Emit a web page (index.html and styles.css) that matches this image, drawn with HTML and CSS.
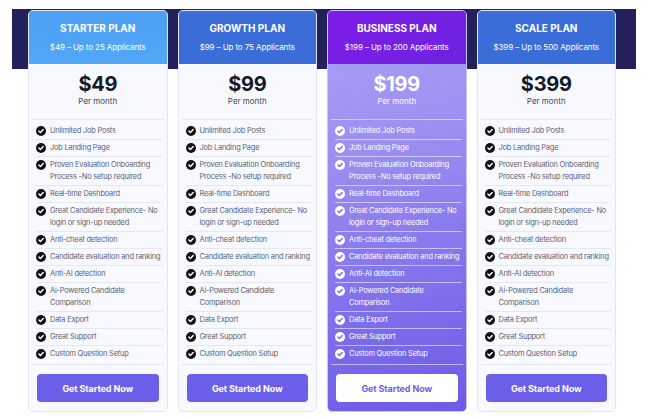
FILE: index.html
```html
<!DOCTYPE html>
<html>
<head>
<meta charset="utf-8">
<link rel="stylesheet" href="styles.css">
</head>
<body>
<div class="stage">
  <div class="plans">
    <div class="card">
      <div class="head head-starter">
        <div class="title">STARTER PLAN</div>
        <div class="sub">$49 – Up to 25 Applicants</div>
      </div>
      <div class="body">
        <div class="price-box">
          <div class="price">$49</div>
          <div class="per">Per month</div>
        </div>
        <ul class="features">
          <li><svg class="ic" viewBox="0 0 10 10"><circle cx="5" cy="5" r="5"/><path d="M2.9 5.1 L4.4 6.6 L7.2 3.6"/></svg><span>Unlimited Job Posts</span></li>
          <li><svg class="ic" viewBox="0 0 10 10"><circle cx="5" cy="5" r="5"/><path d="M2.9 5.1 L4.4 6.6 L7.2 3.6"/></svg><span>Job Landing Page</span></li>
          <li><svg class="ic" viewBox="0 0 10 10"><circle cx="5" cy="5" r="5"/><path d="M2.9 5.1 L4.4 6.6 L7.2 3.6"/></svg><span>Proven Evaluation Onboarding Process -No setup required</span></li>
          <li><svg class="ic" viewBox="0 0 10 10"><circle cx="5" cy="5" r="5"/><path d="M2.9 5.1 L4.4 6.6 L7.2 3.6"/></svg><span>Real-time Dashboard</span></li>
          <li><svg class="ic" viewBox="0 0 10 10"><circle cx="5" cy="5" r="5"/><path d="M2.9 5.1 L4.4 6.6 L7.2 3.6"/></svg><span>Great Candidate Experience- No login or sign-up needed</span></li>
          <li><svg class="ic" viewBox="0 0 10 10"><circle cx="5" cy="5" r="5"/><path d="M2.9 5.1 L4.4 6.6 L7.2 3.6"/></svg><span>Anti-cheat detection</span></li>
          <li><svg class="ic" viewBox="0 0 10 10"><circle cx="5" cy="5" r="5"/><path d="M2.9 5.1 L4.4 6.6 L7.2 3.6"/></svg><span>Candidate evaluation and ranking</span></li>
          <li><svg class="ic" viewBox="0 0 10 10"><circle cx="5" cy="5" r="5"/><path d="M2.9 5.1 L4.4 6.6 L7.2 3.6"/></svg><span>Anti-AI detection</span></li>
          <li><svg class="ic" viewBox="0 0 10 10"><circle cx="5" cy="5" r="5"/><path d="M2.9 5.1 L4.4 6.6 L7.2 3.6"/></svg><span>Ai-Powered Candidate Comparison</span></li>
          <li><svg class="ic" viewBox="0 0 10 10"><circle cx="5" cy="5" r="5"/><path d="M2.9 5.1 L4.4 6.6 L7.2 3.6"/></svg><span>Data Export</span></li>
          <li><svg class="ic" viewBox="0 0 10 10"><circle cx="5" cy="5" r="5"/><path d="M2.9 5.1 L4.4 6.6 L7.2 3.6"/></svg><span>Great Support</span></li>
          <li><svg class="ic" viewBox="0 0 10 10"><circle cx="5" cy="5" r="5"/><path d="M2.9 5.1 L4.4 6.6 L7.2 3.6"/></svg><span>Custom Question Setup</span></li>
        </ul>
        <div class="foot"><button class="btn">Get Started Now</button></div>
      </div>
    </div>

    <div class="card">
      <div class="head head-blue">
        <div class="title">GROWTH PLAN</div>
        <div class="sub">$99 – Up to 75 Applicants</div>
      </div>
      <div class="body">
        <div class="price-box">
          <div class="price">$99</div>
          <div class="per">Per month</div>
        </div>
        <ul class="features">
          <li><svg class="ic" viewBox="0 0 10 10"><circle cx="5" cy="5" r="5"/><path d="M2.9 5.1 L4.4 6.6 L7.2 3.6"/></svg><span>Unlimited Job Posts</span></li>
          <li><svg class="ic" viewBox="0 0 10 10"><circle cx="5" cy="5" r="5"/><path d="M2.9 5.1 L4.4 6.6 L7.2 3.6"/></svg><span>Job Landing Page</span></li>
          <li><svg class="ic" viewBox="0 0 10 10"><circle cx="5" cy="5" r="5"/><path d="M2.9 5.1 L4.4 6.6 L7.2 3.6"/></svg><span>Proven Evaluation Onboarding Process -No setup required</span></li>
          <li><svg class="ic" viewBox="0 0 10 10"><circle cx="5" cy="5" r="5"/><path d="M2.9 5.1 L4.4 6.6 L7.2 3.6"/></svg><span>Real-time Dashboard</span></li>
          <li><svg class="ic" viewBox="0 0 10 10"><circle cx="5" cy="5" r="5"/><path d="M2.9 5.1 L4.4 6.6 L7.2 3.6"/></svg><span>Great Candidate Experience- No login or sign-up needed</span></li>
          <li><svg class="ic" viewBox="0 0 10 10"><circle cx="5" cy="5" r="5"/><path d="M2.9 5.1 L4.4 6.6 L7.2 3.6"/></svg><span>Anti-cheat detection</span></li>
          <li><svg class="ic" viewBox="0 0 10 10"><circle cx="5" cy="5" r="5"/><path d="M2.9 5.1 L4.4 6.6 L7.2 3.6"/></svg><span>Candidate evaluation and ranking</span></li>
          <li><svg class="ic" viewBox="0 0 10 10"><circle cx="5" cy="5" r="5"/><path d="M2.9 5.1 L4.4 6.6 L7.2 3.6"/></svg><span>Anti-AI detection</span></li>
          <li><svg class="ic" viewBox="0 0 10 10"><circle cx="5" cy="5" r="5"/><path d="M2.9 5.1 L4.4 6.6 L7.2 3.6"/></svg><span>Ai-Powered Candidate Comparison</span></li>
          <li><svg class="ic" viewBox="0 0 10 10"><circle cx="5" cy="5" r="5"/><path d="M2.9 5.1 L4.4 6.6 L7.2 3.6"/></svg><span>Data Export</span></li>
          <li><svg class="ic" viewBox="0 0 10 10"><circle cx="5" cy="5" r="5"/><path d="M2.9 5.1 L4.4 6.6 L7.2 3.6"/></svg><span>Great Support</span></li>
          <li><svg class="ic" viewBox="0 0 10 10"><circle cx="5" cy="5" r="5"/><path d="M2.9 5.1 L4.4 6.6 L7.2 3.6"/></svg><span>Custom Question Setup</span></li>
        </ul>
        <div class="foot"><button class="btn">Get Started Now</button></div>
      </div>
    </div>

    <div class="card card-featured">
      <div class="head head-purple">
        <div class="title">BUSINESS PLAN</div>
        <div class="sub">$199 – Up to 200 Applicants</div>
      </div>
      <div class="body">
        <div class="price-box">
          <div class="price">$199</div>
          <div class="per">Per month</div>
        </div>
        <ul class="features">
          <li><svg class="ic" viewBox="0 0 10 10"><circle cx="5" cy="5" r="5"/><path d="M2.9 5.1 L4.4 6.6 L7.2 3.6"/></svg><span>Unlimited Job Posts</span></li>
          <li><svg class="ic" viewBox="0 0 10 10"><circle cx="5" cy="5" r="5"/><path d="M2.9 5.1 L4.4 6.6 L7.2 3.6"/></svg><span>Job Landing Page</span></li>
          <li><svg class="ic" viewBox="0 0 10 10"><circle cx="5" cy="5" r="5"/><path d="M2.9 5.1 L4.4 6.6 L7.2 3.6"/></svg><span>Proven Evaluation Onboarding Process -No setup required</span></li>
          <li><svg class="ic" viewBox="0 0 10 10"><circle cx="5" cy="5" r="5"/><path d="M2.9 5.1 L4.4 6.6 L7.2 3.6"/></svg><span>Real-time Dashboard</span></li>
          <li><svg class="ic" viewBox="0 0 10 10"><circle cx="5" cy="5" r="5"/><path d="M2.9 5.1 L4.4 6.6 L7.2 3.6"/></svg><span>Great Candidate Experience- No login or sign-up needed</span></li>
          <li><svg class="ic" viewBox="0 0 10 10"><circle cx="5" cy="5" r="5"/><path d="M2.9 5.1 L4.4 6.6 L7.2 3.6"/></svg><span>Anti-cheat detection</span></li>
          <li><svg class="ic" viewBox="0 0 10 10"><circle cx="5" cy="5" r="5"/><path d="M2.9 5.1 L4.4 6.6 L7.2 3.6"/></svg><span>Candidate evaluation and ranking</span></li>
          <li><svg class="ic" viewBox="0 0 10 10"><circle cx="5" cy="5" r="5"/><path d="M2.9 5.1 L4.4 6.6 L7.2 3.6"/></svg><span>Anti-AI detection</span></li>
          <li><svg class="ic" viewBox="0 0 10 10"><circle cx="5" cy="5" r="5"/><path d="M2.9 5.1 L4.4 6.6 L7.2 3.6"/></svg><span>Ai-Powered Candidate Comparison</span></li>
          <li><svg class="ic" viewBox="0 0 10 10"><circle cx="5" cy="5" r="5"/><path d="M2.9 5.1 L4.4 6.6 L7.2 3.6"/></svg><span>Data Export</span></li>
          <li><svg class="ic" viewBox="0 0 10 10"><circle cx="5" cy="5" r="5"/><path d="M2.9 5.1 L4.4 6.6 L7.2 3.6"/></svg><span>Great Support</span></li>
          <li><svg class="ic" viewBox="0 0 10 10"><circle cx="5" cy="5" r="5"/><path d="M2.9 5.1 L4.4 6.6 L7.2 3.6"/></svg><span>Custom Question Setup</span></li>
        </ul>
        <div class="foot"><button class="btn">Get Started Now</button></div>
      </div>
    </div>

    <div class="card">
      <div class="head head-blue">
        <div class="title">SCALE PLAN</div>
        <div class="sub">$399 – Up to 500 Applicants</div>
      </div>
      <div class="body">
        <div class="price-box">
          <div class="price">$399</div>
          <div class="per">Per month</div>
        </div>
        <ul class="features">
          <li><svg class="ic" viewBox="0 0 10 10"><circle cx="5" cy="5" r="5"/><path d="M2.9 5.1 L4.4 6.6 L7.2 3.6"/></svg><span>Unlimited Job Posts</span></li>
          <li><svg class="ic" viewBox="0 0 10 10"><circle cx="5" cy="5" r="5"/><path d="M2.9 5.1 L4.4 6.6 L7.2 3.6"/></svg><span>Job Landing Page</span></li>
          <li><svg class="ic" viewBox="0 0 10 10"><circle cx="5" cy="5" r="5"/><path d="M2.9 5.1 L4.4 6.6 L7.2 3.6"/></svg><span>Proven Evaluation Onboarding Process -No setup required</span></li>
          <li><svg class="ic" viewBox="0 0 10 10"><circle cx="5" cy="5" r="5"/><path d="M2.9 5.1 L4.4 6.6 L7.2 3.6"/></svg><span>Real-time Dashboard</span></li>
          <li><svg class="ic" viewBox="0 0 10 10"><circle cx="5" cy="5" r="5"/><path d="M2.9 5.1 L4.4 6.6 L7.2 3.6"/></svg><span>Great Candidate Experience- No login or sign-up needed</span></li>
          <li><svg class="ic" viewBox="0 0 10 10"><circle cx="5" cy="5" r="5"/><path d="M2.9 5.1 L4.4 6.6 L7.2 3.6"/></svg><span>Anti-cheat detection</span></li>
          <li><svg class="ic" viewBox="0 0 10 10"><circle cx="5" cy="5" r="5"/><path d="M2.9 5.1 L4.4 6.6 L7.2 3.6"/></svg><span>Candidate evaluation and ranking</span></li>
          <li><svg class="ic" viewBox="0 0 10 10"><circle cx="5" cy="5" r="5"/><path d="M2.9 5.1 L4.4 6.6 L7.2 3.6"/></svg><span>Anti-AI detection</span></li>
          <li><svg class="ic" viewBox="0 0 10 10"><circle cx="5" cy="5" r="5"/><path d="M2.9 5.1 L4.4 6.6 L7.2 3.6"/></svg><span>Ai-Powered Candidate Comparison</span></li>
          <li><svg class="ic" viewBox="0 0 10 10"><circle cx="5" cy="5" r="5"/><path d="M2.9 5.1 L4.4 6.6 L7.2 3.6"/></svg><span>Data Export</span></li>
          <li><svg class="ic" viewBox="0 0 10 10"><circle cx="5" cy="5" r="5"/><path d="M2.9 5.1 L4.4 6.6 L7.2 3.6"/></svg><span>Great Support</span></li>
          <li><svg class="ic" viewBox="0 0 10 10"><circle cx="5" cy="5" r="5"/><path d="M2.9 5.1 L4.4 6.6 L7.2 3.6"/></svg><span>Custom Question Setup</span></li>
        </ul>
        <div class="foot"><button class="btn">Get Started Now</button></div>
      </div>
    </div>
  </div>
</div>
</body>
</html>
```

FILE: styles.css
```css
* { box-sizing: border-box; }
html, body { margin: 0; padding: 0; background: #ffffff; }
body { font-family: Inter, "Noto Sans", sans-serif; }

.stage {
  width: 651px;
  height: 419px;
  padding: 10px 0 0 28px;
  background: linear-gradient(#23215b, #23215b) no-repeat 12px 9px / 624px 60px, #ffffff;
}

.plans {
  display: grid;
  grid-template-columns: repeat(4, 139.5px);
  column-gap: 10px;
}

.card {
  height: 402px;
  border: 1px solid #e3e6f0;
  border-radius: 5px;
  background: #f8f9ff;
  overflow: hidden;
  display: flex;
  flex-direction: column;
}

.head {
  height: 53px;
  padding-top: 11px;
  text-align: center;
  color: #ffffff;
}
.head-starter { background: linear-gradient(180deg, #4c9ff3, #51a7f8); }
.head-blue { background: #3b6dd8; }
.head-purple { background: linear-gradient(135deg, #7d1de9, #6d23de); }

.title {
  font-size: 10px;
  font-weight: 700;
  line-height: 12px;
}
.sub {
  margin-top: 7px;
  font-size: 8px;
  line-height: 12px;
  letter-spacing: -0.1px;
}

.body {
  flex: 1;
  padding: 0 3px;
  display: flex;
  flex-direction: column;
}

.price-box {
  padding: 8px 0 13px;
  text-align: center;
  border-bottom: 1px solid #e6e8f0;
}
.price {
  font-size: 20px;
  font-weight: 700;
  line-height: 24px;
  color: #131a2c;
  letter-spacing: -0.3px;
}
.per {
  font-size: 8px;
  line-height: 10px;
  color: #444a5a;
}

.features {
  list-style: none;
  margin: 0;
  padding: 3px 1px 0 4px;
}
.features li {
  display: flex;
  align-items: flex-start;
  gap: 4px;
  padding: 2px 0;
  border-bottom: 1px solid #e6e8f0;
  font-size: 7.4px;
  line-height: 12px;
  color: #5c6272;
  letter-spacing: -0.2px;
  white-space: nowrap;
}
.features li span { white-space: normal; }
.features li:last-child { border-bottom: none; }

.ic {
  flex: none;
  width: 10px;
  height: 10px;
  margin-top: 1px;
}
.ic circle { fill: #121212; }
.ic path { fill: none; stroke: #ffffff; stroke-width: 1.4; stroke-linecap: round; stroke-linejoin: round; }

.foot {
  margin-top: 2px;
  border-top: 1px solid #e6e8f0;
  padding: 9px 5px 0;
}
.btn {
  display: block;
  width: 100%;
  height: 28px;
  border: none;
  border-radius: 4px;
  background: #6b5fe9;
  color: #ffffff;
  font-family: Inter, "Noto Sans", sans-serif;
  font-size: 9px;
  font-weight: 700;
  letter-spacing: -0.1px;
}

/* featured */
.card-featured {
  border-color: #c9c2f6;
  background: linear-gradient(165deg, #aca2f4 0%, #9a8ef1 35%, #7f70ec 70%, #6c5be6 100%);
}
.card-featured .price,
.card-featured .per,
.card-featured .features li { color: #ffffff; }
.card-featured .price-box,
.card-featured .features li,
.card-featured .foot { border-color: rgba(255, 255, 255, 0.55); }
.card-featured .features li:last-child { border-bottom: none; }
.card-featured .ic circle { fill: #ffffff; }
.card-featured .ic path { stroke: #7a6cee; }
.card-featured .btn { background: #ffffff; color: #6b5fe9; }
```
